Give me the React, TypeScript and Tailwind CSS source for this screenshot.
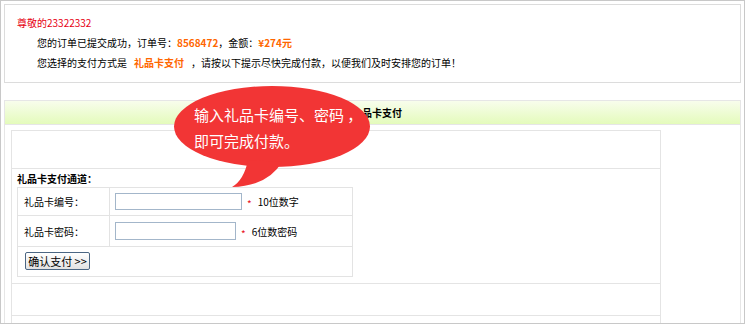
export default function App() {
  return (
    <div className="relative h-[324px] w-[745px] overflow-hidden border border-[#c8c8c8] bg-white px-[3px] pt-[3px] font-['Noto_Sans_CJK_SC',sans-serif] text-[10px] text-black">
      {/* Order summary */}
      <div className="h-[79px] border border-[#dcdcdc]">
        <div className="pl-[12px] pt-[9px] leading-[18px] text-[#e60012]">尊敬的23322332</div>
        <div className="mt-[1px] pl-[32px] leading-[20px]">
          <div>
            您的订单已提交成功，订单号：
            <span className="font-bold text-[#ff6600]">8568472</span>
            ，金额：
            <span className="font-bold text-[#ff6600]">¥274元</span>
          </div>
          <div className="flex">
            <span>您选择的支付方式是</span>
            <span className="mx-[7px] font-bold text-[#ff6600]">礼品卡支付</span>
            <span>，请按以下提示尽快完成付款，以便我们及时安排您的订单！</span>
          </div>
        </div>
      </div>

      {/* Payment panel */}
      <div className="mt-[17px] h-[300px] border border-[#e6e6e6]">
        <div className="flex h-[24px] items-center border-b border-[#e6e6e6] bg-gradient-to-b from-[#f8fdec] to-[#e4fbbb] pl-[347px] font-bold">
          礼品卡支付
        </div>

        <div className="ml-[6px] mt-[5px] w-[650px] border border-[#e4e4e4]">
          <div className="h-[38px] border-b border-[#e4e4e4]" />

          <div className="border-b border-[#e4e4e4] pl-[5px] pb-[6px]">
            <div className="flex h-[18px] items-center font-bold">礼品卡支付通道：</div>
            <div className="w-[336px] border border-[#e3e3e3]">
              <div className="flex h-[28px] border-b border-[#e3e3e3]">
                <div className="flex w-[92px] items-center border-r border-[#e3e3e3] pl-[6px]">礼品卡编号：</div>
                <div className="flex items-center pl-[5px]">
                  <input className="h-[17px] w-[127px] border border-[#a3b6ca] bg-white outline-none" />
                  <span className="ml-[5px] mt-[4px] text-[#e8101a]">*</span>
                  <span className="ml-[6px]">10位数字</span>
                </div>
              </div>
              <div className="flex h-[31px] border-b border-[#e3e3e3]">
                <div className="flex w-[92px] items-center border-r border-[#e3e3e3] pl-[6px]">礼品卡密码：</div>
                <div className="flex items-center pl-[5px]">
                  <input type="password" className="h-[18px] w-[121px] border border-[#a3b6ca] bg-white outline-none" />
                  <span className="ml-[5px] mt-[4px] text-[#e8101a]">*</span>
                  <span className="ml-[6px]">6位数密码</span>
                </div>
              </div>
              <div className="h-[29px] pl-[7px] pt-[5px]">
                <button className="flex h-[18px] w-[65px] items-center justify-center rounded-[2px] border border-[#4b6683] bg-gradient-to-b from-[#ffffff] to-[#e2e2e2] text-[11px] leading-none text-black">
                  确认支付 &gt;&gt;
                </button>
              </div>
            </div>
          </div>

          <div className="h-[32px] border-b border-[#e4e4e4]" />
          <div className="h-[40px]" />
        </div>
      </div>

      {/* Speech bubble hint */}
      <svg className="absolute left-[169px] top-[81px]" width="210" height="110" viewBox="0 0 210 110">
        <ellipse cx="102" cy="44.5" rx="98" ry="40.5" fill="#f23535" />
        <path d="M78 78 Q74 98 62 105 Q98 104 112 80 Z" fill="#f23535" />
      </svg>
      <div className="absolute left-[193px] top-[101px] text-[15px] leading-[26px] text-white">
        <div>输入礼品卡编号、密码 ，</div>
        <div>即可完成付款。</div>
      </div>
    </div>
  );
}
